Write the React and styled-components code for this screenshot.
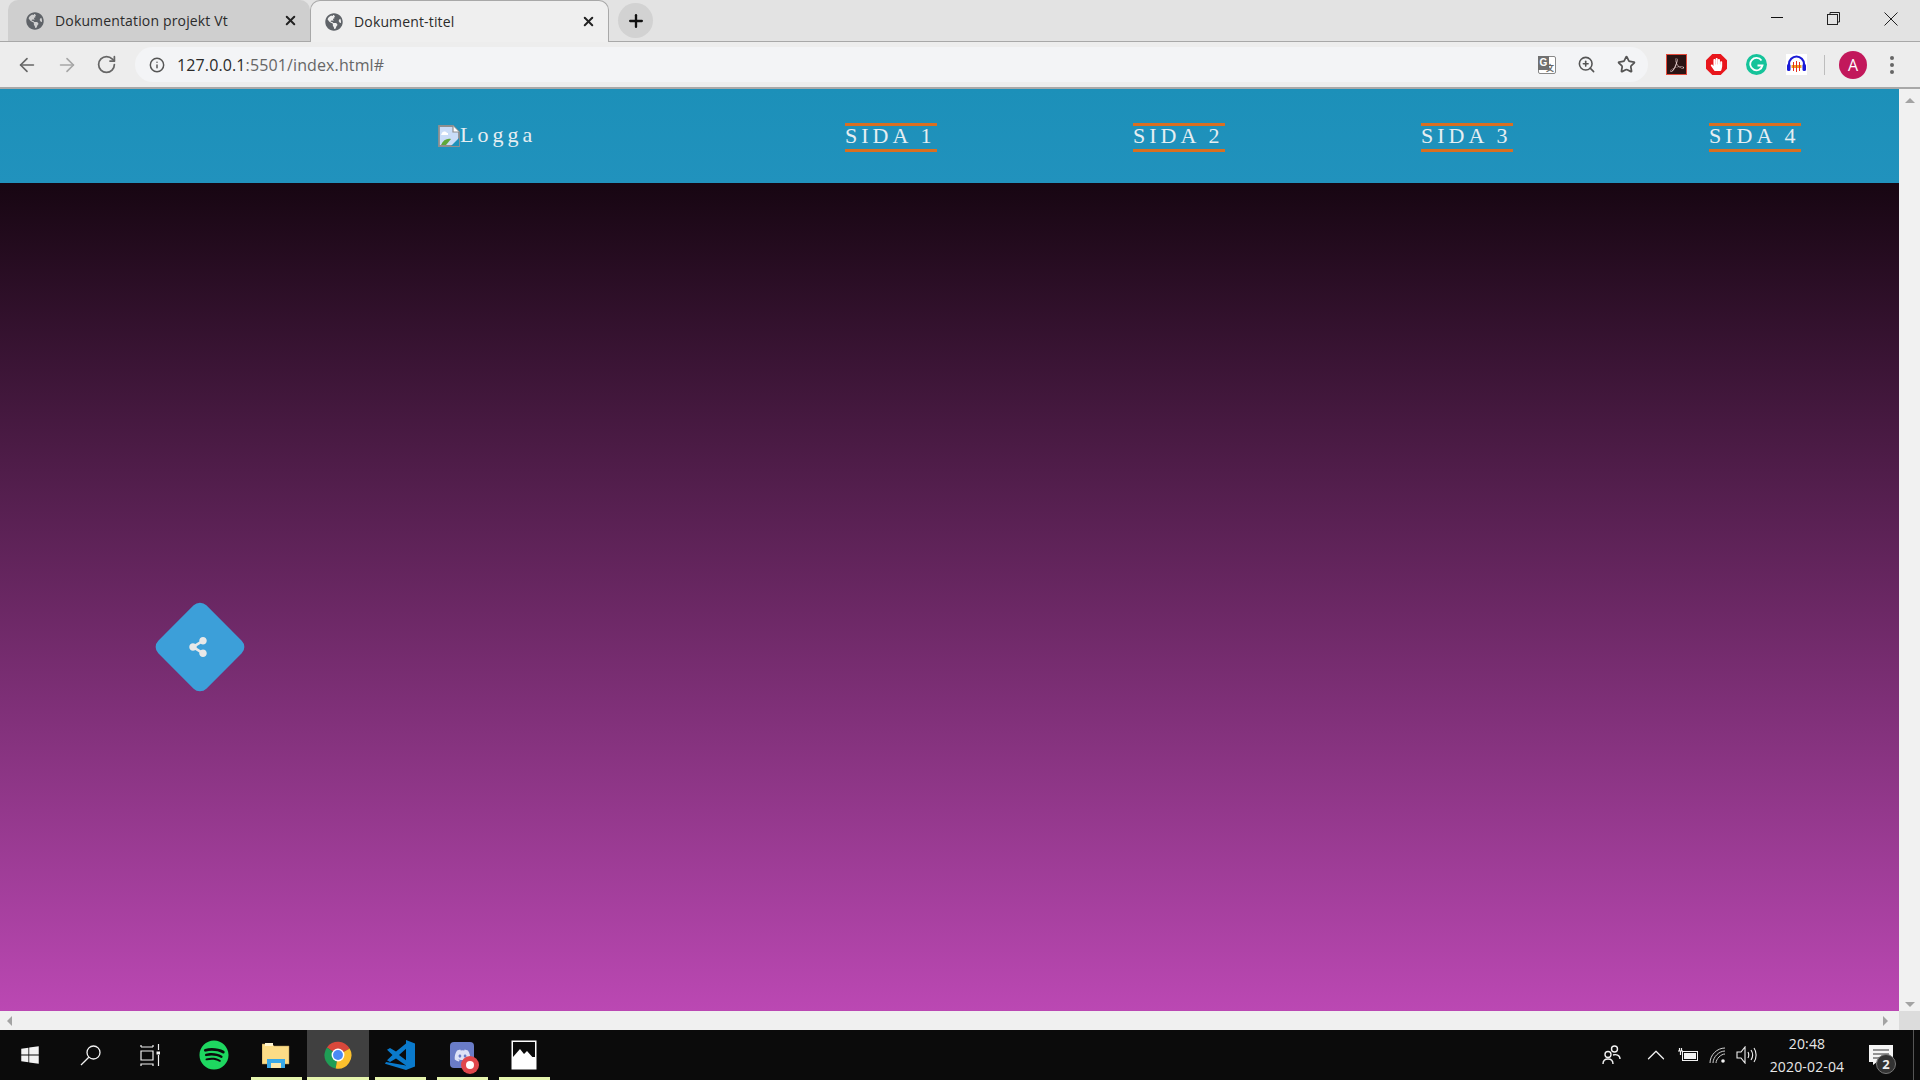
import React from "react";
import styled, { createGlobalStyle } from "styled-components";
import { ArrowLeft, ArrowRight, RotateCw, Info, ZoomIn, Star, X, Plus, ChevronUp } from "lucide-react";
import { FaGlobeAmericas, FaShareAlt, FaWindows, FaSpotify, FaDiscord, FaHandPaper } from "react-icons/fa";
import { SiAdobeacrobatreader } from "react-icons/si";

const GlobalStyle = createGlobalStyle`
  html, body { margin: 0; padding: 0; height: 100%; overflow: hidden; }
  * { box-sizing: border-box; }
  body { font-family: "Open Sans", "Noto Sans", sans-serif; }
`;

const Screen = styled.div`
  width: 1920px;
  height: 1080px;
  display: flex;
  flex-direction: column;
  overflow: hidden;
`;

/* browser chrome */
const TabStrip = styled.div`
  height: 42px;
  flex: none;
  display: flex;
  align-items: flex-end;
  padding-left: 8px;
  background: #e3e3e3;
  border-bottom: 1px solid #a8a8a8;
`;
const Tab = styled.div`
  width: ${(p) => (p.$active ? "299px" : "302px")};
  height: ${(p) => (p.$active ? "42px" : "41px")};
  margin-bottom: ${(p) => (p.$active ? "-1px" : "0")};
  display: flex;
  align-items: center;
  padding: 0 12px 0 ${(p) => (p.$active ? "14px" : "18px")};
  border-radius: 10px 10px 0 0;
  background: ${(p) => (p.$active ? "#efefef" : "#cfcfcf")};
  border: ${(p) => (p.$active ? "1px solid #a8a8a8" : "none")};
  border-bottom: none;
  color: #2b2b2b;
  font-size: 14px;
  letter-spacing: 0.15px;
`;
const TabTitle = styled.span`
  flex: 1;
  margin-left: 11px;
  white-space: nowrap;
`;
const NewTab = styled.div`
  width: 35px;
  height: 35px;
  margin: 0 0 3px 9px;
  border-radius: 50%;
  background: #d2d2d2;
  display: flex;
  align-items: center;
  justify-content: center;
  color: #111;
`;
const WindowControls = styled.div`
  margin-left: auto;
  align-self: stretch;
  display: flex;
  align-items: flex-start;
  gap: 44px;
  padding: 12px 22px 0 0;
`;
const MinimizeBar = styled.span`
  width: 12px;
  height: 1px;
  margin-top: 5px;
  background: #111;
`;
const Toolbar = styled.div`
  height: 45px;
  flex: none;
  display: flex;
  align-items: center;
  padding-left: 16px;
  background: #ededed;
`;
const NavButtons = styled.div`
  width: 119px;
  display: flex;
  align-items: center;
  gap: 18px;
  color: #666;
`;
const Omnibox = styled.div`
  width: 1513px;
  height: 35px;
  display: flex;
  align-items: center;
  padding: 0 12px 0 14px;
  border-radius: 18px;
  background: #f3f4f6;
  color: #555;
`;
const Url = styled.div`
  flex: 1;
  margin-left: 12px;
  font-size: 16px;
  letter-spacing: 0.12px;
  color: #666;
  b { font-weight: 400; color: #2a2a2a; }
`;
const OmniIcons = styled.div`
  display: flex;
  align-items: center;
  gap: 21px;
`;
const Translate = styled.div`
  position: relative;
  width: 18px;
  height: 18px;
  background: #fff;
  border: 1px solid #888;
  border-radius: 2px;
  font: 700 10px "Liberation Sans", sans-serif;
  color: #666;
  span {
    position: absolute;
    left: -1px;
    top: -1px;
    width: 11px;
    height: 14px;
    background: #707070;
    color: #fff;
    text-align: center;
    line-height: 14px;
  }
  i {
    position: absolute;
    right: 1px;
    bottom: 0;
    font-style: normal;
    font-size: 8px;
    font-family: "Noto Sans CJK SC", sans-serif;
  }
`;
const Extensions = styled.div`
  display: flex;
  align-items: center;
  gap: 19px;
  margin-left: 18px;
`;
const ExtBox = styled.div`
  width: 21px;
  height: 21px;
  display: flex;
  align-items: center;
  justify-content: center;
  background: ${(p) => p.$bg || "transparent"};
  border: ${(p) => p.$border || "none"};
  border-radius: ${(p) => p.$radius || "0"};
  color: ${(p) => p.$color || "#fff"};
  clip-path: ${(p) => p.$clip || "none"};
`;
const Separator = styled.div`
  width: 1px;
  height: 20px;
  margin-left: -2px;
  background: #bdbdbd;
`;
const Avatar = styled.div`
  width: 28px;
  height: 28px;
  margin-left: 14px;
  border-radius: 50%;
  background: #c2185b;
  color: #fff;
  display: flex;
  align-items: center;
  justify-content: center;
  font-size: 16px;
`;
const Dots = styled.div`
  margin-left: 23px;
  display: flex;
  flex-direction: column;
  gap: 3px;
  span {
    width: 4px;
    height: 4px;
    border-radius: 50%;
    background: #666;
  }
`;

/* page */
const Viewport = styled.div`
  flex: 1;
  min-height: 0;
  display: flex;
  border-top: 2px solid #a8a8a8;
`;
const Page = styled.div`
  position: relative;
  width: 1899px;
  display: flex;
  flex-direction: column;
`;
const Nav = styled.nav`
  height: 94px;
  flex: none;
  display: flex;
  align-items: center;
  padding-left: 438px;
  gap: 196px;
  background: linear-gradient(#1c90b9, #2192bd);
  font-family: "Liberation Serif", "Times New Roman", serif;
  font-size: 22px;
  letter-spacing: 4px;
  color: #e6eef2;
`;
const Logo = styled.div`
  width: 211px;
  display: flex;
  align-items: center;
  margin-top: -3px;
  white-space: nowrap;
  svg { margin-top: 2px; }
`;
const NavLink = styled.a`
  width: 92px;
  height: 29px;
  margin-top: 3px;
  display: flex;
  align-items: center;
  white-space: nowrap;
  padding: 0 0 3px 0;
  border-top: 3px solid #d96f21;
  border-bottom: 3px solid #d96f21;
`;
const Hero = styled.main`
  flex: 1;
  background: linear-gradient(#170612, #bb48b3);
`;
const ShareButton = styled.div`
  position: absolute;
  left: 166px;
  top: 524px;
  width: 68px;
  height: 68px;
  border-radius: 9px;
  background: #3c9fd9;
  transform: rotate(45deg);
  display: flex;
  align-items: center;
  justify-content: center;
  color: #e8e8e8;
  svg { transform: rotate(-45deg) translate(-2px, 0); }
`;
const VScroll = styled.div`
  width: 21px;
  background: #f1f1f1;
  display: flex;
  flex-direction: column;
  justify-content: space-between;
  align-items: center;
  padding: 9px 0 4px;
`;
const HScroll = styled.div`
  height: 19px;
  flex: none;
  display: flex;
  align-items: center;
  justify-content: space-between;
  padding-left: 7px;
  background: #f0f0f0;
`;
const Arrow = styled.span`
  width: 0;
  height: 0;
  border: 5px solid transparent;
  ${(p) => p.$dir === "up" && "border-bottom: 5px solid #a3a3a3; border-top-width: 0;"}
  ${(p) => p.$dir === "down" && "border-top: 5px solid #a3a3a3; border-bottom-width: 0;"}
  ${(p) => p.$dir === "left" && "border-right: 5px solid #a3a3a3; border-left-width: 0;"}
  ${(p) => p.$dir === "right" && "border-left: 5px solid #a3a3a3; border-right-width: 0;"}
`;
const ScrollEnd = styled.div`
  display: flex;
  align-items: center;
  gap: 11px;
  height: 100%;
`;
const Corner = styled.div`
  width: 21px;
  height: 100%;
  background: #dcdcdc;
`;

/* taskbar */
const Taskbar = styled.footer`
  height: 50px;
  flex: none;
  display: flex;
  align-items: center;
  background: #0b0b0b;
  color: #f2f2f2;
`;
const SystemButton = styled.div`
  width: 60px;
  height: 100%;
  display: flex;
  align-items: center;
  justify-content: center;
`;
const Apps = styled.div`
  display: flex;
  height: 100%;
  margin-left: 3px;
`;
const AppCell = styled.div`
  position: relative;
  width: 62px;
  height: 100%;
  display: flex;
  align-items: center;
  justify-content: center;
  background: ${(p) => (p.$active ? "#404040" : "transparent")};
  &::after {
    content: "";
    display: ${(p) => (p.$open ? "block" : "none")};
    position: absolute;
    bottom: 0;
    left: ${(p) => (p.$active ? "0" : "6px")};
    right: ${(p) => (p.$active ? "0" : "5px")};
    height: 3px;
    background: #e6f5ae;
  }
`;
const Tray = styled.div`
  margin-left: auto;
  height: 100%;
  display: flex;
  align-items: center;
  border-right: 1px solid #555;
  margin-right: 6px;
`;
const TrayIcon = styled.div`
  width: ${(p) => p.$w}px;
  display: flex;
  justify-content: center;
`;
const Clock = styled.div`
  width: 96px;
  text-align: center;
  font-size: 14px;
  letter-spacing: 0.15px;
  line-height: 23px;
  color: #e8e8e8;
`;
const Notification = styled.div`
  position: relative;
  width: 24px;
  height: 20px;
  margin: 0 20px 0 14px;
`;
const Badge = styled.div`
  position: absolute;
  right: -3px;
  bottom: -9px;
  width: 20px;
  height: 20px;
  border-radius: 50%;
  background: #333;
  border: 1px solid #777;
  display: flex;
  align-items: center;
  justify-content: center;
  font-size: 13px;
  font-weight: 700;
  color: #eee;
`;
const DiscordBox = styled.div`
  position: relative;
  width: 24px;
  height: 26px;
  border-radius: 4px;
  background: #6a7cc7;
  display: flex;
  align-items: center;
  justify-content: center;
`;
const RecordDot = styled.span`
  position: absolute;
  right: -5px;
  bottom: -6px;
  width: 18px;
  height: 18px;
  border-radius: 50%;
  background: #e0474c;
  &::after {
    content: "";
    position: absolute;
    inset: 5px;
    border-radius: 50%;
    background: #fff;
  }
`;

const BrokenImage = () => (
  <svg width="22" height="22" viewBox="0 0 22 22">
    <path d="M1 1h14l6 6v14H1z" fill="#c9dcf7" stroke="#8f8f8f" strokeWidth="1.8" />
    <path d="M15 1v6h6" fill="#fff" stroke="#8f8f8f" strokeWidth="1.2" />
    <path d="M4 8c1-2 4-2 5 0h1v2H3z" fill="#fff" />
    <path d="M3 20c2-5 6-7 10-6l-5 6z" fill="#5fa83a" />
    <path d="M13 21l8-8v8z" fill="#1e91ba" />
  </svg>
);

const ChromeLogo = () => (
  <svg width="28" height="30" viewBox="0 0 48 48">
    <path d="M24 24L44 13A23 23 0 0 0 5 11z" fill="#d9483b" />
    <path d="M24 24L5 11A23 23 0 0 0 20 47z" fill="#1f9d55" />
    <path d="M24 24L20 47A23 23 0 0 0 44 13z" fill="#fbc02d" />
    <circle cx="24" cy="24" r="11" fill="#fff" />
    <circle cx="24" cy="24" r="8.5" fill="#4a8af4" />
  </svg>
);

const VsCode = () => (
  <svg width="30" height="30" viewBox="0 0 30 34" preserveAspectRatio="none">
    <path d="M21 0l9 4v26l-9 4L0 27l1-2 20 4z" fill="#0a7acc" />
    <path d="M21 4L11 13 5 9 2 11l5.500 6L2 23l3 2 6-4 10 8z" fill="#0a7acc" />
    <path d="M21 10l-7 7 7 6z" fill="#0b0b0b" />
  </svg>
);

const TaskView = () => (
  <svg width="20" height="22" viewBox="0 0 20 22" fill="none" stroke="#f2f2f2" strokeWidth="1.2">
    <path d="M1 3V1M13 3V1M1 3h12M1 7h12v9H1zM1 22v-2h12v2M18.5 0v6M18.5 11v11" />
    <rect x="16.5" y="7.5" width="4" height="3" fill="#f2f2f2" stroke="none" />
  </svg>
);

const SearchGlass = () => (
  <svg width="21" height="21" viewBox="0 0 21 21" fill="none" stroke="#f2f2f2" strokeWidth="1.3">
    <circle cx="13.5" cy="7.5" r="6.5" />
    <path d="M8.8 12.2L1 20" />
  </svg>
);

const Folder = () => (
  <svg width="28" height="26" viewBox="0 0 28 26">
    <path d="M0 2h10l2 2h15v18H0z" fill="#fcdc86" stroke="#a58b4e" strokeWidth="0.5" />
    <rect x="3" y="1" width="8" height="3" fill="#fff5cf" />
    <path d="M5 26v-9h18v9h-4v-5H9v5z" fill="#39a9e8" />
    <rect x="9" y="21" width="10" height="5" fill="#fce9ac" />
  </svg>
);

const DiscordRecord = () => (
  <DiscordBox>
    <FaDiscord size={17} color="#dde2f7" />
    <RecordDot />
  </DiscordBox>
);

const Photos = () => (
  <svg width="26" height="30" viewBox="0 0 26 30">
    <rect x="0.5" y="0.5" width="25" height="29" fill="#fff" />
    <rect x="2" y="2" width="22" height="15" fill="#0b0b0b" />
    <path d="M2 17l7-8 4 5 3-3 8 9v4H2z" fill="#fff" />
  </svg>
);

const PeopleIcon = () => (
  <svg width="19" height="20" viewBox="0 0 19 20" fill="none" stroke="#f2f2f2" strokeWidth="1.4">
    <circle cx="12.5" cy="4" r="3" />
    <circle cx="6" cy="9.5" r="3" />
    <path d="M1 19c0-3 2-5 5-5s5 2 5 5M11 10c3-1 7 0 7 4" />
  </svg>
);

const BatteryIcon = () => (
  <svg width="20" height="14" viewBox="0 0 20 14" fill="none" stroke="#f2f2f2">
    <rect x="4.5" y="3.5" width="15" height="9" />
    <rect x="6" y="5" width="12" height="6" fill="#f2f2f2" stroke="none" />
    <path d="M0 3h5M1.5 0v3M3.5 0v3M2.5 3v4" strokeWidth="1.2" />
  </svg>
);

const WifiIcon = () => (
  <svg width="17" height="16" viewBox="0 0 17 16" fill="none" stroke="#cfcfcf" strokeWidth="1">
    <path d="M1 16C1 8 8 1 16 1M4 16C4 10 10 4 16 4M7 16c0-4 5-9 9-9" />
    <circle cx="14" cy="14" r="1.8" fill="#f2f2f2" stroke="none" />
  </svg>
);

const VolumeIcon = () => (
  <svg width="21" height="18" viewBox="0 0 21 18" fill="none" stroke="#f2f2f2" strokeWidth="1.1">
    <path d="M1 6h4l4-5v16l-4-5H1zM12 6c1 2 1 4 0 6M15 4c2 3 2 7 0 10M18 2c2.8 4 2.8 10 0 14" />
  </svg>
);

const RestoreIcon = () => (
  <svg width="13" height="13" viewBox="0 0 13 13" fill="none" stroke="#222" strokeWidth="1">
    <rect x="0.5" y="2.5" width="10" height="10" />
    <path d="M3 2.5V0.5h9.5V10h-2" />
  </svg>
);

const CloseIcon = () => (
  <svg width="14" height="14" viewBox="0 0 14 14" stroke="#222" strokeWidth="1">
    <path d="M0.5 0.5l13 13M13.5 0.5l-13 13" />
  </svg>
);

const GrammarlyG = () => (
  <svg width="15" height="15" viewBox="0 0 15 15" fill="none" stroke="#fff" strokeWidth="1.8">
    <path d="M12.5 3.5A6.2 6.2 0 1 0 13.5 8.5H8.5" />
  </svg>
);

const Audacity = () => (
  <svg width="21" height="21" viewBox="0 0 21 21">
    <rect width="21" height="21" fill="#fff" />
    <path d="M3 14V10a7.5 7.5 0 0 1 15 0v4" fill="none" stroke="#1a1ad6" strokeWidth="2.2" />
    <rect x="1" y="10" width="3.5" height="7" rx="1.5" fill="#1a1ad6" />
    <rect x="16.5" y="10" width="3.5" height="7" rx="1.5" fill="#1a1ad6" />
    <path d="M5.5 11h10v3h-10z" fill="#f0a020" />
    <path d="M7 8h1v9H7zM10 7h1v11h-1zM13 8h1v9h-1z" fill="#e53020" />
  </svg>
);

const links = ["SIDA 1", "SIDA 2", "SIDA 3", "SIDA 4"];

export default function App() {
  return (
    <Screen>
      <GlobalStyle />
      <TabStrip>
        <Tab>
          <FaGlobeAmericas size={18} color="#5f6368" />
          <TabTitle>Dokumentation projekt Vt</TabTitle>
          <X size={15} strokeWidth={3.2} color="#222" />
        </Tab>
        <Tab $active>
          <FaGlobeAmericas size={18} color="#5f6368" />
          <TabTitle>Dokument-titel</TabTitle>
          <X size={15} strokeWidth={3.2} color="#222" />
        </Tab>
        <NewTab>
          <Plus size={20} strokeWidth={2.8} />
        </NewTab>
        <WindowControls>
          <MinimizeBar />
          <RestoreIcon />
          <CloseIcon />
        </WindowControls>
      </TabStrip>

      <Toolbar>
        <NavButtons>
          <ArrowLeft size={22} strokeWidth={1.8} />
          <ArrowRight size={22} strokeWidth={1.8} color="#a6a6a6" />
          <RotateCw size={21} strokeWidth={2} />
        </NavButtons>
        <Omnibox>
          <Info size={16} strokeWidth={2.2} />
          <Url>
            <b>127.0.0.1</b>:5501/index.html#
          </Url>
          <OmniIcons>
            <Translate>
              <span>G</span>
              <i>文</i>
            </Translate>
            <ZoomIn size={19} strokeWidth={2} />
            <Star size={19} strokeWidth={2.2} />
          </OmniIcons>
        </Omnibox>
        <Extensions>
          <ExtBox $bg="#2a1414" $border="1px solid #e2493a" $color="#e0c8c8">
            <SiAdobeacrobatreader size={14} />
          </ExtBox>
          <ExtBox
            $bg="#e8161c"
            $clip="polygon(30% 0, 70% 0, 100% 30%, 100% 70%, 70% 100%, 30% 100%, 0 70%, 0 30%)"
          >
            <FaHandPaper size={13} />
          </ExtBox>
          <ExtBox $bg="#15c39a" $radius="50%">
            <GrammarlyG />
          </ExtBox>
          <Audacity />
          <Separator />
        </Extensions>
        <Avatar>A</Avatar>
        <Dots>
          <span />
          <span />
          <span />
        </Dots>
      </Toolbar>

      <Viewport>
        <Page>
          <Nav>
            <Logo>
              <BrokenImage />
              Logga
            </Logo>
            {links.map((l) => (
              <NavLink key={l}>{l}</NavLink>
            ))}
          </Nav>
          <Hero />
          <ShareButton>
            <FaShareAlt size={20} />
          </ShareButton>
        </Page>
        <VScroll>
          <Arrow $dir="up" />
          <Arrow $dir="down" />
        </VScroll>
      </Viewport>

      <HScroll>
        <Arrow $dir="left" />
        <ScrollEnd>
          <Arrow $dir="right" />
          <Corner />
        </ScrollEnd>
      </HScroll>

      <Taskbar>
        <SystemButton>
          <FaWindows size={20} />
        </SystemButton>
        <SystemButton>
          <SearchGlass />
        </SystemButton>
        <SystemButton>
          <TaskView />
        </SystemButton>
        <Apps>
          <AppCell>
            <FaSpotify size={30} color="#1ed760" />
          </AppCell>
          <AppCell $open>
            <Folder />
          </AppCell>
          <AppCell $open $active>
            <ChromeLogo />
          </AppCell>
          <AppCell $open>
            <VsCode />
          </AppCell>
          <AppCell $open>
            <DiscordRecord />
          </AppCell>
          <AppCell $open>
            <Photos />
          </AppCell>
        </Apps>
        <Tray>
          <TrayIcon $w={54}>
            <PeopleIcon />
          </TrayIcon>
          <TrayIcon $w={36}>
            <ChevronUp size={30} strokeWidth={1} />
          </TrayIcon>
          <TrayIcon $w={28}>
            <BatteryIcon />
          </TrayIcon>
          <TrayIcon $w={31}>
            <WifiIcon />
          </TrayIcon>
          <TrayIcon $w={26}>
            <VolumeIcon />
          </TrayIcon>
          <Clock>
            20:48
            <br />
            2020-02-04
          </Clock>
          <Notification>
            <svg width="24" height="20" viewBox="0 0 24 20">
              <path d="M0 0h24v17H8l-4 3v-3H0z" fill="#f5f5f5" />
              <path d="M4 5h16M4 9h16M4 13h11" stroke="#333" strokeWidth="1.2" />
            </svg>
            <Badge>2</Badge>
          </Notification>
        </Tray>
      </Taskbar>
    </Screen>
  );
}
